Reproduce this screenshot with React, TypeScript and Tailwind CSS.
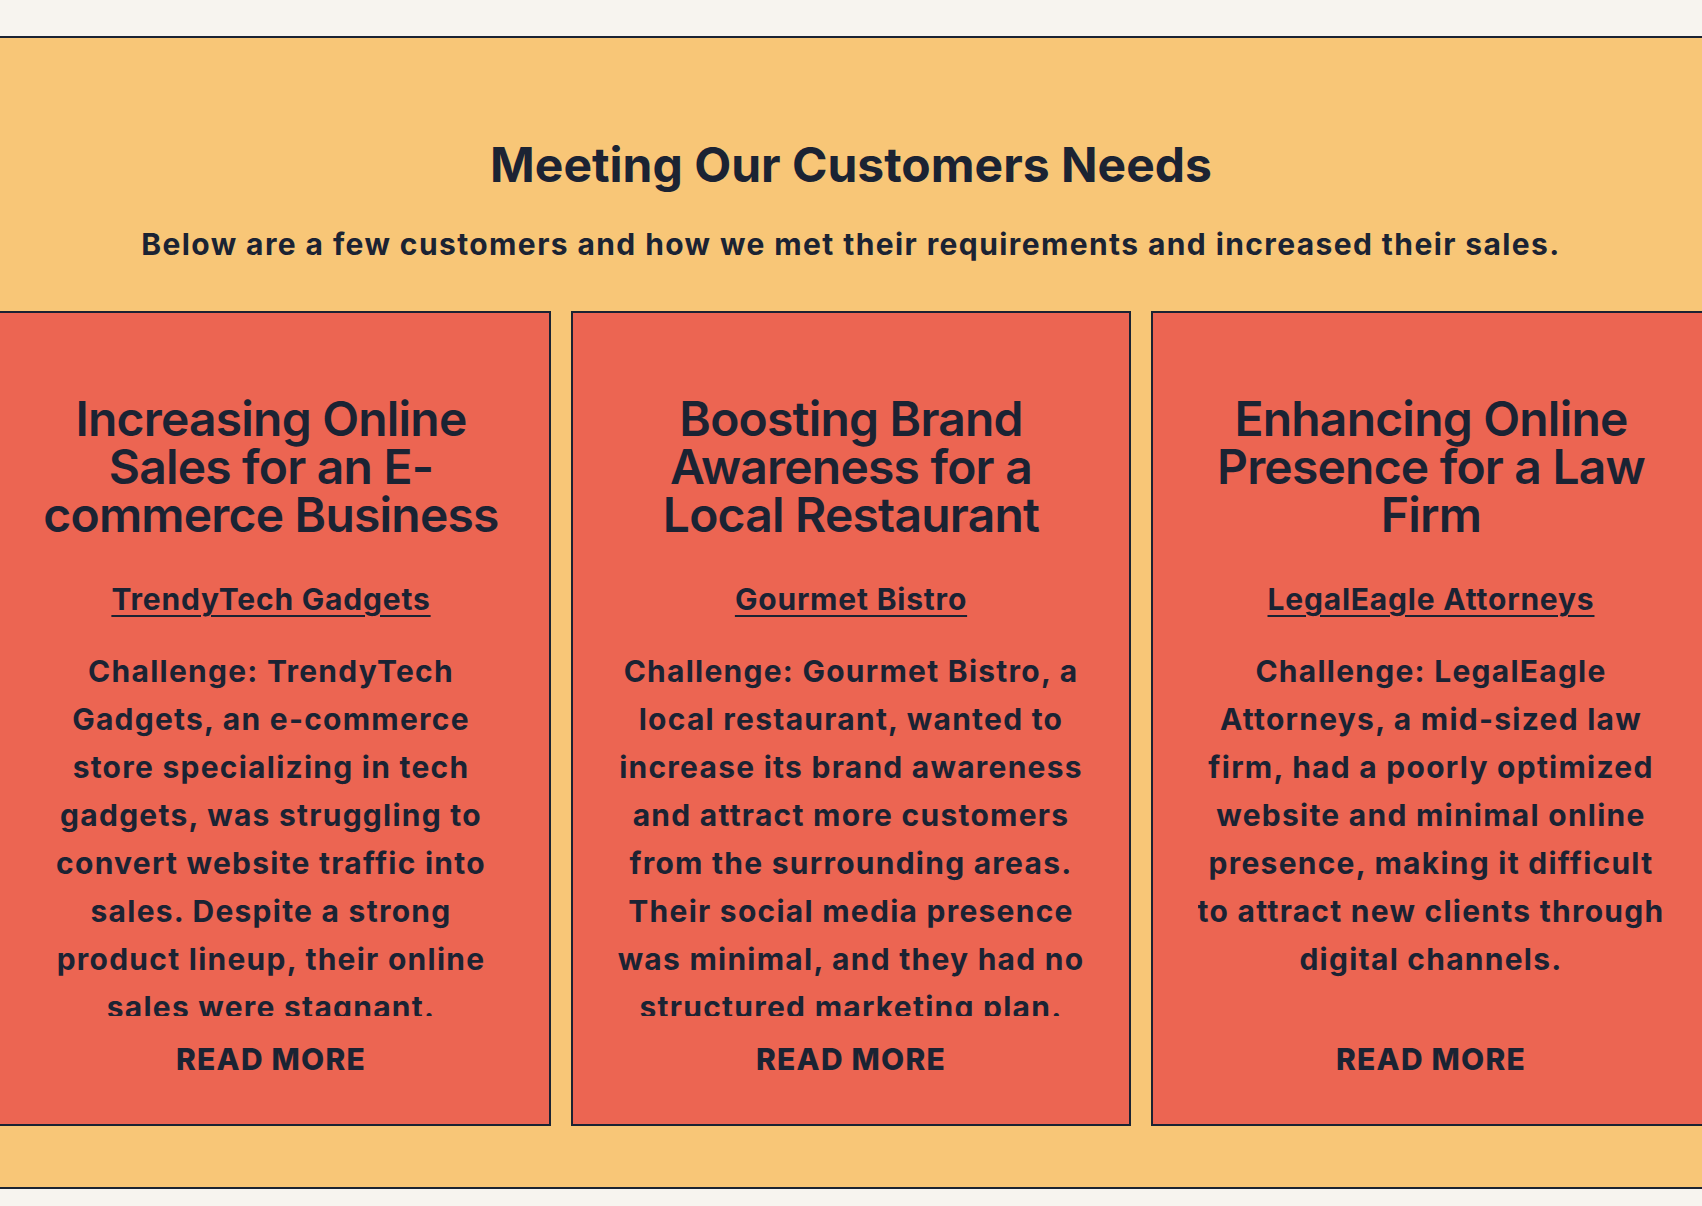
import React from "react";

const cases = [
  {
    title: ["Increasing Online", "Sales for an E-", "commerce Business"],
    client: "TrendyTech Gadgets",
    body: [
      "Challenge: TrendyTech",
      "Gadgets, an e-commerce",
      "store specializing in tech",
      "gadgets, was struggling to",
      "convert website traffic into",
      "sales. Despite a strong",
      "product lineup, their online",
      "sales were stagnant.",
    ],
  },
  {
    title: ["Boosting Brand", "Awareness for a", "Local Restaurant"],
    client: "Gourmet Bistro",
    body: [
      "Challenge: Gourmet Bistro, a",
      "local restaurant, wanted to",
      "increase its brand awareness",
      "and attract more customers",
      "from the surrounding areas.",
      "Their social media presence",
      "was minimal, and they had no",
      "structured marketing plan.",
    ],
  },
  {
    title: ["Enhancing Online", "Presence for a Law", "Firm"],
    client: "LegalEagle Attorneys",
    body: [
      "Challenge: LegalEagle",
      "Attorneys, a mid-sized law",
      "firm, had a poorly optimized",
      "website and minimal online",
      "presence, making it difficult",
      "to attract new clients through",
      "digital channels.",
    ],
  },
];

function CaseCard({ item }: { item: (typeof cases)[number] }) {
  return (
    <div className="w-[560px] h-[815px] shrink-0 border-2 border-[#1b2333] bg-[#ec6552] flex flex-col items-center pt-[82px] text-center">
      <h3 className="font-semibold text-[48px] leading-[48px] tracking-[-0.8px]">
        {item.title.map((line) => (
          <span key={line} className="block whitespace-nowrap">
            {line}
          </span>
        ))}
      </h3>
      <a href="#" className="mt-[38px] text-[30px] leading-[45px] font-bold tracking-[0.8px] underline underline-offset-[5px] decoration-2">
        {item.client}
      </a>
      <div className="mt-[25px] h-[369px] overflow-hidden text-[30px] leading-[48px] font-bold tracking-[1.25px]">
        {item.body.map((line) => (
          <span key={line} className="block whitespace-nowrap">
            {line}
          </span>
        ))}
      </div>
      <a href="#" className="mt-[21px] text-[30px] leading-[45px] font-extrabold tracking-[1.2px]">
        READ MORE
      </a>
    </div>
  );
}

export default function App() {
  return (
    <div className="min-h-screen bg-[#f7f4ef] pt-[36px] pb-[18px] text-[#1b2333] font-['Inter',sans-serif] overflow-hidden">
      <section className="border-y-2 border-[#1b2333] bg-[#f8c677] pt-[98px] pb-[61px]">
        <h2 className="text-center text-[48px] leading-[57.6px] font-bold">Meeting Our Customers Needs</h2>
        <p className="mt-[28px] text-center text-[30px] leading-[45px] font-bold tracking-[1.4px]">
          Below are a few customers and how we met their requirements and increased their sales.
        </p>
        <div className="mt-[44px] flex justify-center gap-5">
          {cases.map((c) => (
            <CaseCard key={c.client} item={c} />
          ))}
        </div>
      </section>
    </div>
  );
}
